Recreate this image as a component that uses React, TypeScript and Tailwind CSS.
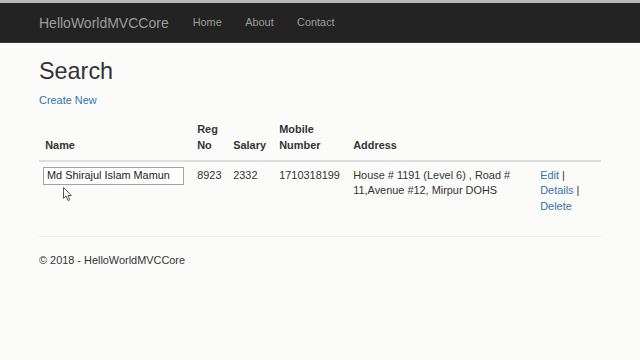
import React from "react";

export default function App() {
  const font = { fontFamily: '"Liberation Sans", Arial, sans-serif' };
  return (
    <div className="min-h-[360px] w-[640px] bg-[#fbfcfa] text-[#333] text-[10.92px] leading-[15.6px] relative" style={font}>
      <div className="h-[3px] bg-[#b9bab7]" />
      <nav className="h-[40px] bg-[#222322] border-b border-[#3a3a3a] flex items-center px-[39px] text-[#9d9d9d]">
        <span className="text-[14px] leading-[18px] mr-[24px]">HelloWorldMVCCore</span>
        <span className="mr-[23.4px]">Home</span>
        <span className="mr-[23.4px]">About</span>
        <span>Contact</span>
      </nav>
      <main className="px-[39px]">
        <h2 className="text-[23.4px] leading-[25.7px] font-medium mt-[16px] mb-[7.8px]">Search</h2>
        <p className="mb-[7.8px]">
          <a className="text-[#3571ad]">Create New</a>
        </p>
        <table className="w-full table-fixed border-collapse mb-[15.6px]">
          <colgroup>
            <col className="w-[152px]" />
            <col className="w-[36px]" />
            <col className="w-[46px]" />
            <col className="w-[74px]" />
            <col className="w-[187px]" />
            <col />
          </colgroup>
          <thead>
            <tr className="border-b-[2px] border-[#ddd]">
              <th className="text-left align-bottom font-bold p-[6.24px]">Name</th>
              <th className="text-left align-bottom font-bold p-[6.24px]">Reg No</th>
              <th className="text-left align-bottom font-bold p-[6.24px]">Salary</th>
              <th className="text-left align-bottom font-bold p-[6.24px]">Mobile Number</th>
              <th className="text-left align-bottom font-bold p-[6.24px]">Address</th>
              <th className="p-[6.24px]"></th>
            </tr>
          </thead>
          <tbody>
            <tr>
              <td className="align-top p-[6.24px] pl-[4px]">
                <div className="w-[141px] h-[18px] border border-[#a3a3a3] bg-white flex items-center px-[3px] mt-[-1px] text-[10.9px] text-[#222]">
                  Md Shirajul Islam Mamun
                </div>
              </td>
              <td className="align-top p-[6.24px]">8923</td>
              <td className="align-top p-[6.24px]">2332</td>
              <td className="align-top p-[6.24px]">1710318199</td>
              <td className="align-top p-[6.24px]">House # 1191 (Level 6) , Road # 11,Avenue #12, Mirpur DOHS</td>
              <td className="align-top p-[6.24px]">
                <a className="text-[#3571ad]">Edit</a> |{" "}
                <a className="text-[#3571ad]">Details</a> |{" "}
                <a className="text-[#3571ad]">Delete</a>
              </td>
            </tr>
          </tbody>
        </table>
        <hr className="border-0 border-t border-[#eeeeee] mb-[15.6px]" />
        <footer>
          <p>© 2018 - HelloWorldMVCCore</p>
        </footer>
      </main>
      <svg className="absolute left-[63px] top-[187px]" width="10" height="15" viewBox="0 0 10 15">
        <path d="M0.5 0.5 L0.5 11.5 L3 9 L5 13.5 L6.8 12.7 L4.9 8.5 L8.3 8.5 Z" fill="#fff" stroke="#555" strokeWidth="1" strokeLinejoin="round" />
      </svg>
    </div>
  );
}
